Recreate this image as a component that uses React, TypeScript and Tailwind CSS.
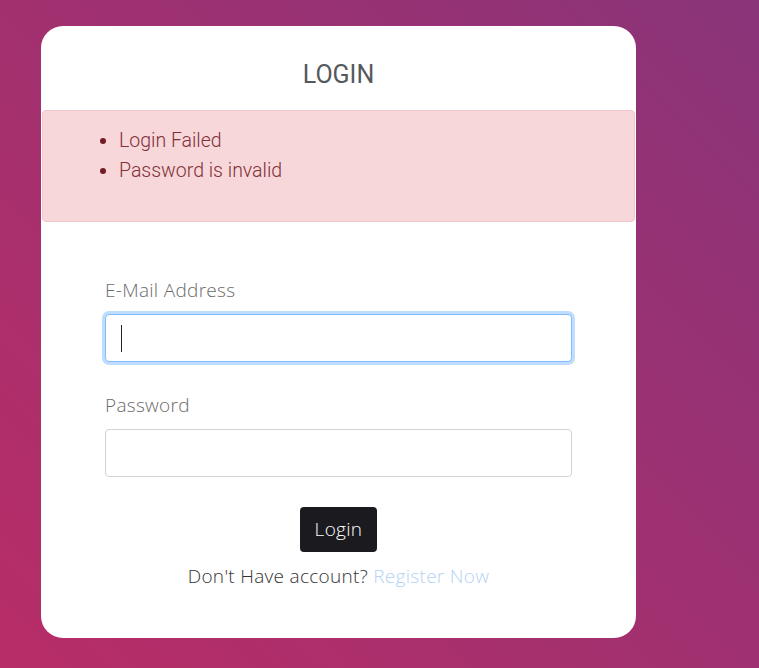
import React from "react";

const sans = { fontFamily: "'Open Sans', Lato, sans-serif" };

export default function App() {
  return (
    <div
      className="min-h-[668px] w-full bg-[linear-gradient(45deg,#b82d67_0%,#a3306f_45%,#8a3479_100%)] px-[41px] pt-[26px] pb-[31px]"
      style={sans}
    >
      <div className="w-[595px] overflow-hidden rounded-[22px] bg-white">
        <h1 className="pt-[34px] pb-[20px] text-center font-['Roboto',sans-serif] text-[25px] leading-[30px] text-[#55595c]">
          LOGIN
        </h1>

        {/* alert */}
        <div className="mx-px rounded-[4px] border border-[#f3c6cc] bg-[#f8d7da] pt-[15px] pb-[35px]">
          <ul className="list-disc pl-[76px] font-['Roboto',sans-serif] text-[19.5px] font-light leading-[30px] text-[#7f3038] marker:text-[#721c24]">
            <li>Login Failed</li>
            <li>Password is invalid</li>
          </ul>
        </div>

        <form className="px-[64px] pt-[55px] pb-[50px] tracking-[0.3px]">
          <label className="block text-[19px] font-light leading-[26px] text-[#6b6b6b]">E-Mail Address</label>
          <div className="relative mt-[11px]">
            <input
              type="email"
              className="block h-[48px] w-full rounded-[4px] border border-[#80bdff] bg-white px-3 shadow-[0_0_0_3px_rgba(0,123,255,0.25)] outline-none"
            />
            <span className="absolute left-[16px] top-[11px] h-[27px] w-px bg-[#222]" />
          </div>

          <label className="mt-[30px] block text-[19px] font-light leading-[26px] text-[#6b6b6b]">Password</label>
          <input
            type="password"
            className="mt-[11px] block h-[48px] w-full rounded-[4px] border border-[#ced4da] bg-white px-3 outline-none"
          />

          <div className="mt-[30px] flex justify-center">
            <button
              type="button"
              className="h-[45px] rounded-[4px] bg-[#1b1a1f] px-[15px] text-[19px] font-light tracking-[0.3px] text-white"
            >
              Login
            </button>
          </div>

          <p className="mt-[12px] text-center text-[19px] font-light leading-[24px] text-[#333]">
            Don't Have account? <a className="text-[#b4d2f2]">Register Now</a>
          </p>
        </form>
      </div>
    </div>
  );
}
